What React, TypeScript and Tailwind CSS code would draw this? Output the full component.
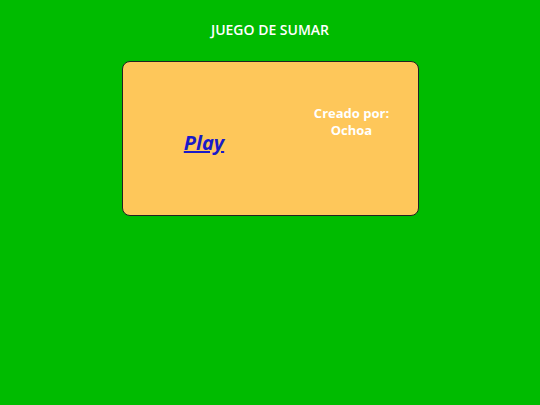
export default function App() {
  return (
    <div
      className="w-[540px] h-[405px] bg-[#00bb00] flex flex-col items-center"
      style={{ fontFamily: '"Open Sans", "Noto Sans", sans-serif' }}
    >
      <h1 className="mt-[21px] text-[14px] leading-[18px] font-semibold text-white">JUEGO DE SUMAR</h1>
      <div className="mt-[22px] w-[297px] h-[155px] bg-[#fec75a] border border-[#222] rounded-[8px] flex">
        <div className="w-[163px] flex items-center justify-center pt-[9px]">
          <a href="#" className="text-[20px] leading-[24px] font-bold italic text-[#1a1ac8] underline">
            Play
          </a>
        </div>
        <div className="flex-1 pt-[43px] text-center text-white font-bold text-[13px] leading-[17px]">
          <p>Creado por:</p>
          <p>Ochoa</p>
        </div>
      </div>
    </div>
  );
}
